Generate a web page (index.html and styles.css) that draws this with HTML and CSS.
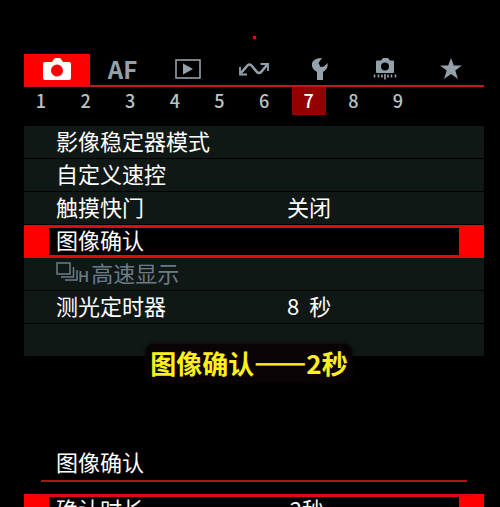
FILE: index.html
```html
<!DOCTYPE html>
<html lang="zh-CN">

<head>
  <meta charset="UTF-8">
  <meta name="viewport" content="width=device-width, initial-scale=1">
  <title>图像确认</title>
  <link rel="stylesheet" href="styles.css">
</head>

<body>
  <div class="screen">
    <span class="record-dot"></span>

    <nav class="tabs">
      <button class="tab active" type="button" aria-label="拍摄">
        <svg width="28" height="22" viewBox="0 0 28 22">
          <path fill="#fff" fill-rule="evenodd" d="M2 4h7l2-3q.6-1 2-1h3q1.400 0 2 1l2 3h6q2 0 2 2v14q0 2-2 2H2q-2 0-2-2V6q0-2 2-2zM14 6.500a6 6 0 1 0 0 12a6 6 0 1 0 0-12z" />
        </svg>
      </button>
      <button class="tab" type="button">AF</button>
      <button class="tab" type="button" aria-label="回放">
        <svg width="26" height="20" viewBox="0 0 26 20">
          <rect x="1" y="1" width="24" height="18" fill="none" stroke="currentColor" stroke-width="1.600" />
          <path fill="currentColor" d="M8 4.500L18 10L8 15.500z" />
        </svg>
      </button>
      <button class="tab" type="button" aria-label="通信">
        <svg width="32" height="16" viewBox="0 0 32 16" fill="none" stroke="currentColor">
          <path stroke-width="2.600" d="M3 12L9 5Q11.500 2 14 5L18 10Q21 14 24 10L29 4" />
          <path stroke-width="1.800" d="M2 6V13.500H9M22.500 3H30V10" />
        </svg>
      </button>
      <button class="tab" type="button" aria-label="设置">
        <svg width="18" height="22" viewBox="0 0 18 22">
          <path fill="currentColor" d="M11 0L7.500 5L9.500 9L13 8.500L16.500 5Q17.500 11 12 14V22H6V14Q0 11 1 5Q3 0 11 0z" />
        </svg>
      </button>
      <button class="tab" type="button" aria-label="自定义功能">
        <svg width="24" height="22" viewBox="0 0 24 22">
          <path fill="currentColor" fill-rule="evenodd" d="M4 2.500h4L10 0h5l2 2.500h3q1 0 1 1V14q0 1-1 1H4q-1 0-1-1V3.500q0-1 1-1zM12 4.500a4 4 0 1 0 0 8a4 4 0 1 0 0-8z" />
          <path stroke="currentColor" stroke-width="1.600" d="M1.500 16.500v3M5.500 16.500v3M18.500 16.500v3M22.500 16.500v3M12 16v5.500M9 16.500v3M15 16.500v3" />
        </svg>
      </button>
      <button class="tab" type="button" aria-label="我的菜单">
        <svg width="22" height="21" viewBox="0 0 22 21">
          <path fill="currentColor" d="M11 0l2.800 7.500H22l-6.700 5L18 21l-7-5l-7 5l2.700-8.500L0 7.500h8.200z" />
        </svg>
      </button>
    </nav>

    <div class="pages">
      <button class="page" type="button">1</button>
      <button class="page" type="button">2</button>
      <button class="page" type="button">3</button>
      <button class="page" type="button">4</button>
      <button class="page" type="button">5</button>
      <button class="page" type="button">6</button>
      <button class="page current" type="button">7</button>
      <button class="page" type="button">8</button>
      <button class="page" type="button">9</button>
    </div>

    <div class="menu">
      <button class="row" type="button"><span>影像稳定器模式</span></button>
      <button class="row" type="button"><span>自定义速控</span></button>
      <button class="row" type="button"><span>触摸快门</span><span>关闭</span></button>
      <button class="row selected" type="button"><span>图像确认</span></button>
      <button class="row" type="button" disabled>
        <span class="with-icon">
          <!-- 高速连拍 -->
          <span class="burst">
            <svg width="22" height="24" viewBox="0 0 22 24" fill="none" stroke="currentColor" stroke-width="1.500">
              <rect x="1" y="3" width="13" height="11" />
              <path d="M5 17H17.500V7M9 20H21V10" />
            </svg>H
          </span>高速显示
        </span>
      </button>
      <button class="row" type="button"><span>测光定时器</span><span>8&nbsp; 秒</span></button>
      <button class="row" type="button" aria-label="空"></button>
      <p class="caption">图像确认<span class="dash">——</span>2秒</p>
    </div>

    <section class="detail">
      <h2>图像确认</h2>
      <button class="row selected" type="button"><span>确认时长</span><span>2秒</span></button>
    </section>
  </div>
</body>

</html>
```
FILE: styles.css
```css
* {
  box-sizing: border-box;
}

body {
  margin: 0;
  background-color: #000;
  color: #fff;
  font-family: "Noto Sans CJK SC", sans-serif;
}

button {
  margin: 0;
  padding: 0;
  border: none;
  background: none;
  color: inherit;
  font-family: inherit;
  cursor: pointer;
}

.screen {
  height: 100vh;
  padding: 36px 16px 0 24px;
  overflow: hidden;
}

.record-dot {
  display: block;
  width: 3px;
  height: 3px;
  margin: 0 auto 15px;
  background-color: #e01010;
}

.tabs {
  display: grid;
  grid-template-columns: repeat(7, 1fr);
  border-bottom: 2px solid #c8141c;
}

.tab {
  display: flex;
  align-items: center;
  justify-content: center;
  height: 31px;
  padding-bottom: 2px;
  color: #93a1ab;
  font-size: 24px;
  font-weight: 700;
  line-height: 28px;
}

.tab.active {
  background-color: #f00;
}

.pages {
  display: flex;
  justify-content: space-between;
  padding-right: 69px;
}

.page {
  width: 34px;
  height: 28px;
  padding-bottom: 2px;
  color: #b9c4c6;
  font-size: 18px;
  font-weight: 500;
  line-height: 26px;
}

.page.current {
  background-color: #940000;
  color: #fff;
}

.menu {
  position: relative;
  margin-top: 11px;
}

.row {
  display: grid;
  grid-template-columns: minmax(0, 54fr) minmax(0, 46fr);
  align-items: center;
  width: 100%;
  height: 33px;
  padding: 0 0 4px 32px;
  border-bottom: 1px solid #000;
  background-color: #101816;
  font-size: 22px;
  line-height: 28px;
  text-align: left;
  white-space: nowrap;
}

.row.selected {
  grid-template-columns: minmax(0, 58fr) minmax(0, 42fr);
  padding: 0 0 5px 7px;
  border: 3px solid #e00a10;
  border-right: 25px solid #f00;
  border-left: 25px solid #f00;
  background-color: #000;
  line-height: 22px;
}

.row:disabled {
  color: #6c7c86;
}

.with-icon {
  display: flex;
  align-items: center;
  gap: 2px;
}

.burst {
  display: flex;
  align-items: flex-end;
  height: 24px;
  font-size: 15px;
  font-weight: 500;
  line-height: 16px;
}

/* subtitle lying over the last row */
.caption {
  position: absolute;
  right: 10px;
  bottom: -25px;
  left: 0;
  width: max-content;
  margin: 0 auto;
  padding: 0 4px;
  border-radius: 8px;
  background-color: #0a0306;
  box-shadow: 0 0 4px #0a0306;
  color: #fff01c;
  font-size: 26px;
  font-weight: 700;
  line-height: 38px;
}

.dash {
  -webkit-text-stroke: 1px #fff01c;
}

.detail {
  margin-top: 89px;
}

.detail h2 {
  margin: 0 17px 12px;
  padding: 0 15px 3px;
  border-bottom: 2px solid #b01218;
  font-size: 22px;
  font-weight: 400;
  line-height: 31px;
}
```
